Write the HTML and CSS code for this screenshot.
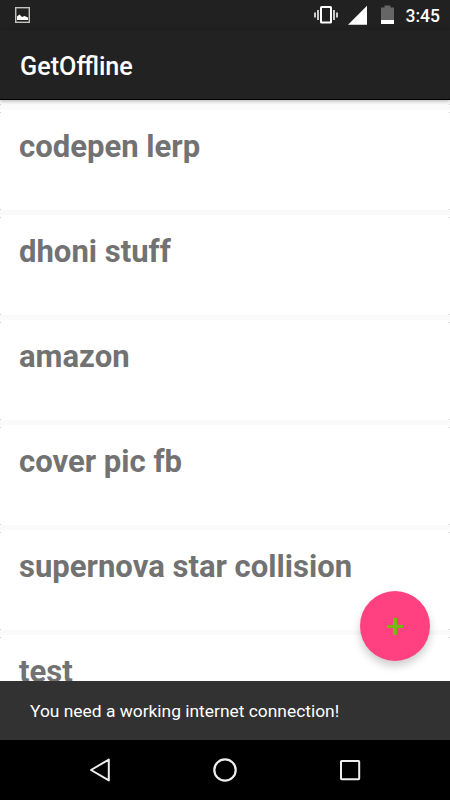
FILE: index.html
```
<!DOCTYPE html>
<html lang="en">
<head>
    <meta charset="UTF-8">
    <meta name="viewport" content="width=device-width, initial-scale=1.0">
    <title>GetOffline</title>
    <link rel="stylesheet" href="styles.css">
</head>
<body>
    <div class="screen">
        <!-- status bar -->
        <div class="status">
            <svg class="icon-picture" width="15" height="16" viewBox="0 0 15 16">
                <rect x="0.7" y="0.7" width="13.6" height="14.6" fill="none" stroke="#c4c4bf" stroke-width="1.4"/>
                <path d="M2 13V9.5L4.5 7.5L7 10L9.5 9L13 10.5V13Z" fill="#fff"/>
            </svg>
            <svg class="icon-vibrate" width="24" height="20" viewBox="0 0 24 20">
                <rect x="7" y="2" width="10" height="15.6" rx="0.6" fill="none" stroke="#fff" stroke-width="2"/>
                <path d="M4 5V15M20 5V15M1 7.5V12.5M23 7.5V12.5" stroke="#ddd" stroke-width="1.8"/>
            </svg>
            <svg class="icon-signal" width="19" height="20" viewBox="0 0 19 20">
                <path d="M0 19.8L19 0.8V19.8Z" fill="#fff"/>
            </svg>
            <svg class="icon-battery" width="13" height="20" viewBox="0 0 13 20">
                <path d="M0 2.5H3.5V0.5H9.5V2.5H13V15H0Z" fill="#666"/>
                <path d="M0 15H13V19H0Z" fill="#fff"/>
            </svg>
            <span class="clock">3:45</span>
        </div>

        <div class="toolbar">GetOffline</div>

        <div class="content">
            <ul class="list">
                <li class="card">codepen lerp</li>
                <li class="card">dhoni stuff</li>
                <li class="card">amazon</li>
                <li class="card">cover pic fb</li>
                <li class="card">supernova star collision</li>
                <li class="card">test</li>
            </ul>
            <div class="fab">
                <svg width="18" height="18" viewBox="0 0 18 18">
                    <path d="M7 1H11V8H17V11H11V18H7V11H1V8H7Z" fill="#79b80a"/>
                </svg>
            </div>
        </div>

        <div class="snackbar">You need a working internet connection!</div>

        <!-- navigation buttons -->
        <div class="nav">
            <svg width="24" height="24" viewBox="0 0 24 24">
                <path d="M20.8 1.6V22.4L3 12Z" fill="none" stroke="#eee" stroke-width="2" stroke-linejoin="round"/>
            </svg>
            <svg width="24" height="24" viewBox="0 0 24 24">
                <circle cx="12" cy="12" r="10.7" fill="none" stroke="#eee" stroke-width="2.2"/>
            </svg>
            <svg width="24" height="24" viewBox="0 0 24 24">
                <rect x="3" y="3" width="18.2" height="18.2" rx="0.6" fill="none" stroke="#eee" stroke-width="2"/>
            </svg>
        </div>
    </div>
</body>
</html>
```
FILE: styles.css
```
*{
    margin: 0;
    padding: 0;
    box-sizing: border-box;
}

body{
    font-family: Roboto, sans-serif;
    background-color: #fafafa;
}

.screen{
    width: 450px;
    height: 800px;
    display: flex;
    flex-direction: column;
    overflow: hidden;
}

/* status bar */
.status{
    height: 30px;
    padding: 0 10px 0 15px;
    display: flex;
    align-items: center;
    background-color: #212121;
    color: #fff;
}
.icon-picture{
    margin-right: auto;
}
.icon-vibrate{
    margin-right: 10px;
}
.icon-signal{
    margin-right: 14px;
}
.icon-battery{
    margin-right: 12px;
}
.clock{
    font-size: 17.5px;
    font-weight: 500;
    line-height: 30px;
    padding-top: 2px;
}

.toolbar{
    height: 70px;
    padding: 1px 20px 0;
    line-height: 72px;
    font-size: 25.2px;
    font-weight: 500;
    color: #fff;
    background-color: #222;
    border-bottom: 1px solid #000;
    box-shadow: 0 1px 4px rgba(0, 0, 0, 0.3);
    position: relative;
    z-index: 1;
}

/* list of saved pages */
.content{
    height: 581px;
    position: relative;
    overflow: hidden;
}
.list{
    list-style: none;
    padding-top: 10px;
    display: flex;
    flex-direction: column;
    gap: 5px;
}
.card{
    height: 100px;
    flex-shrink: 0;
    padding: 18px 19px 0;
    line-height: 38px;
    font-size: 31.05px;
    font-weight: bold;
    color: #727272;
    background-color: #fff;
    position: relative;
}
/* shadow left at the card corners */
.card::before,
.card::after{
    content: "";
    position: absolute;
    top: -6px;
    width: 1px;
    height: 7px;
    border-top: 1px solid #cfcfcf;
    border-bottom: 1px solid #cfcfcf;
}
.card::before{
    left: 0;
}
.card::after{
    right: 0;
}

/* floating add button */
.fab{
    position: absolute;
    right: 20px;
    bottom: 20px;
    width: 70px;
    height: 70px;
    display: flex;
    align-items: center;
    justify-content: center;
    background-color: #ff4081;
    border-radius: 50%;
    box-shadow: 0 5px 9px rgba(0, 0, 0, 0.2);
}

.snackbar{
    height: 59px;
    padding: 0 30px;
    line-height: 60px;
    font-size: 17.4px;
    color: #fff;
    background-color: #323232;
}

.nav{
    height: 60px;
    padding: 0 88px;
    display: flex;
    align-items: center;
    justify-content: space-between;
    background-color: #000;
}
```
